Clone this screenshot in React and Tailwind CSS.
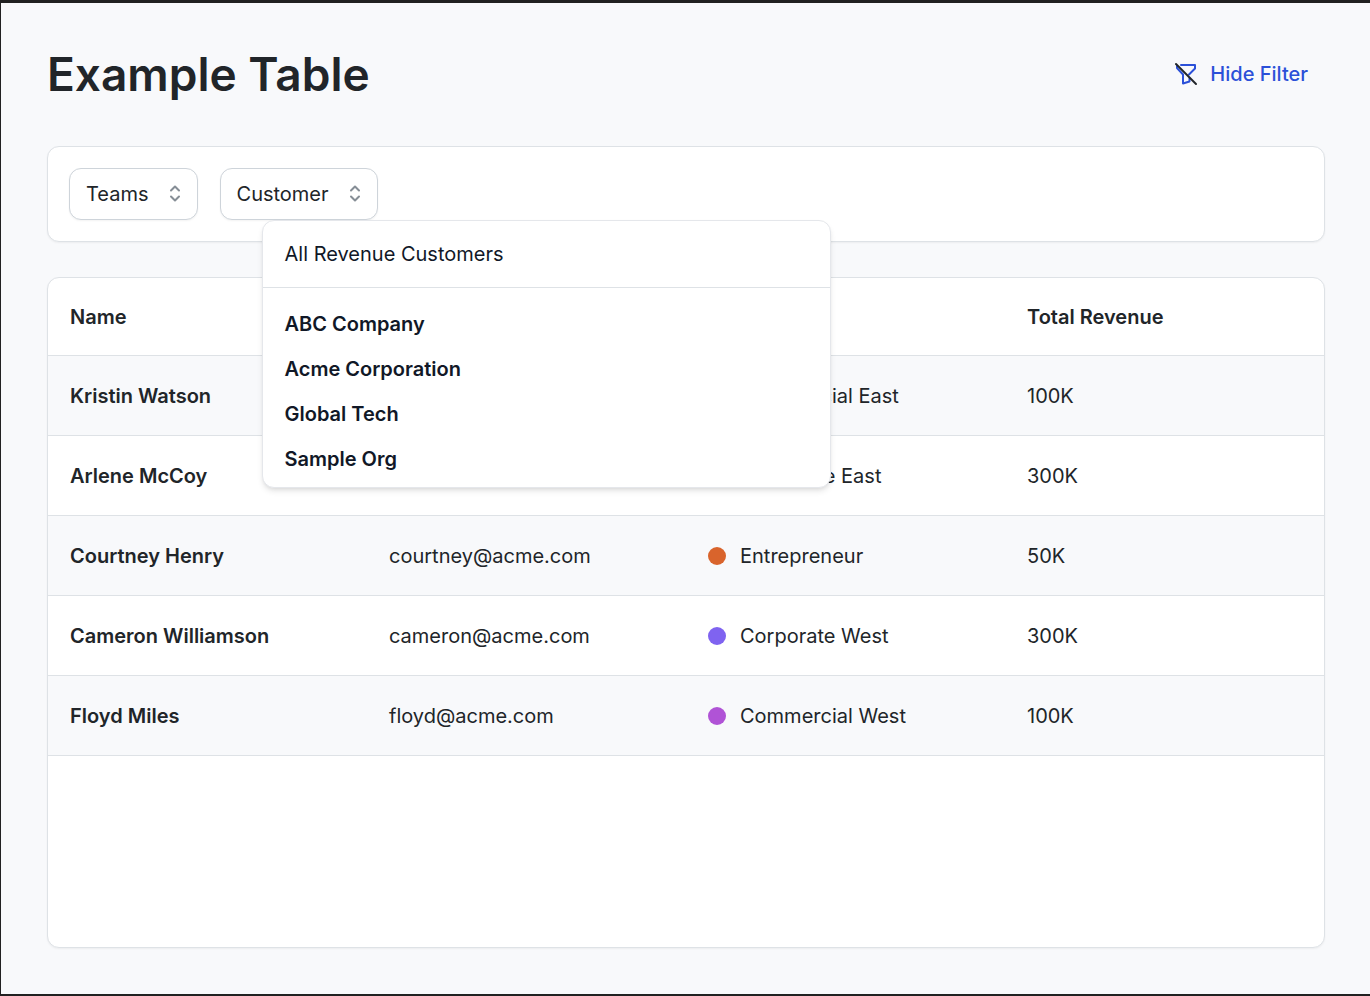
import { useState } from "react";

const rows = [
  { name: "Kristin Watson", email: "kristin@acme.com", team: "Commercial East", dot: "bg-[#2f9e6e]", revenue: "100K" },
  { name: "Arlene McCoy", email: "arlene@acme.com", team: "Corporate East", dot: "bg-[#2b7de0]", revenue: "300K" },
  { name: "Courtney Henry", email: "courtney@acme.com", team: "Entrepreneur", dot: "bg-[#d9642c]", revenue: "50K" },
  { name: "Cameron Williamson", email: "cameron@acme.com", team: "Corporate West", dot: "bg-[#7f63f0]", revenue: "300K" },
  { name: "Floyd Miles", email: "floyd@acme.com", team: "Commercial West", dot: "bg-[#b053d6]", revenue: "100K" },
];

const customers = ["ABC Company", "Acme Corporation", "Global Tech", "Sample Org"];

function FilterOffIcon() {
  return (
    <svg className="size-6" viewBox="0 0 24 24" fill="none" aria-hidden="true">
      <path
        d="M7 3H21V6.5L15 12.5M15.5 16V19.5L9 21.5V12.5L3 6V4"
        stroke="#2b50d8"
        strokeWidth="2"
        strokeLinecap="round"
        strokeLinejoin="round"
      />
      <path d="M2 2L22 22" stroke="#212529" strokeWidth="2" strokeLinecap="round" />
    </svg>
  );
}

function SelectorIcon() {
  return (
    <svg className="h-5 w-3" viewBox="0 0 12 20" fill="none" aria-hidden="true">
      <path
        d="M2 6.5L6 2.5L10 6.5M2 12.5L6 16.5L10 12.5"
        stroke="#868e96"
        strokeWidth="2"
        strokeLinecap="round"
        strokeLinejoin="round"
      />
    </svg>
  );
}

function FilterButton({ label, ...props }) {
  return (
    <button
      type="button"
      className="flex h-[52px] items-center gap-5 rounded-xl border border-[#ced4da] bg-white px-4 shadow-xs"
      {...props}
    >
      {label}
      <SelectorIcon />
    </button>
  );
}

export default function App() {
  const [menuOpen, setMenuOpen] = useState(true);
  const [filterShown, setFilterShown] = useState(true);

  return (
    <div className="flex min-h-screen flex-col border-t-3 border-b-2 border-l border-[#212121] bg-[#f8f9fb] pt-10 pr-[45px] pb-[46px] pl-[46px] font-['Inter',sans-serif] text-xl text-[#212529]">
      <header className="flex h-[62px] items-center justify-between pr-[17px]">
        <h1 className="text-[46px] leading-none font-semibold">Example Table</h1>
        <button
          type="button"
          onClick={() => setFilterShown(!filterShown)}
          className="flex items-center gap-3 font-medium text-[#2b50d8]"
        >
          <FilterOffIcon />
          {filterShown ? "Hide Filter" : "Show Filter"}
        </button>
      </header>

      {filterShown && (
        <section aria-label="Filters" className="mt-[41px] flex gap-[22px] rounded-xl border border-[#dee2e6] bg-white p-[21px] shadow-xs">
          <FilterButton label="Teams" />
          <div className="relative">
            <FilterButton
              label="Customer"
              aria-haspopup="menu"
              aria-expanded={menuOpen}
              onClick={() => setMenuOpen(!menuOpen)}
            />
            {menuOpen && (
              <div role="menu" className="absolute top-full left-[42px] z-10 w-[569px] rounded-xl border border-[#e5e7eb] bg-white text-[#111827] shadow-md">
                <button role="menuitem" type="button" className="block h-[67px] w-full border-b border-[#dee2e6] px-[22px] text-left">
                  All Revenue Customers
                </button>
                <div className="flex flex-col pt-[13px] pb-1.5">
                  {customers.map((customer) => (
                    <button key={customer} role="menuitem" type="button" className="h-[45px] px-[22px] text-left font-semibold">
                      {customer}
                    </button>
                  ))}
                </div>
              </div>
            )}
          </div>
        </section>
      )}

      <section className="mt-[35px] flex-1 overflow-hidden rounded-xl border border-[#dee2e6] bg-white shadow-xs">
        <table className="w-full table-fixed text-left">
          <thead>
            <tr className="h-[77px] border-b border-[#dee2e6]">
              <th className="px-[22px] pt-0.5 font-semibold">Name</th>
              <th className="px-[22px] pt-0.5 font-semibold">Email</th>
              <th className="px-[22px] pt-0.5 font-semibold">Team</th>
              <th className="px-[22px] pt-0.5 font-semibold">Total Revenue</th>
            </tr>
          </thead>
          <tbody>
            {rows.map((row) => (
              <tr key={row.name} className="h-20 border-b border-[#dee2e6] odd:bg-[#f8f9fb]">
                <th scope="row" className="px-[22px] pt-0.5 font-semibold">{row.name}</th>
                <td className="px-[22px] pt-0.5">{row.email}</td>
                <td className="px-[22px] pt-0.5">
                  <span className="flex items-center gap-3.5">
                    <span className={`size-[18px] rounded-full ${row.dot}`} />
                    {row.team}
                  </span>
                </td>
                <td className="px-[22px] pt-0.5">{row.revenue}</td>
              </tr>
            ))}
          </tbody>
        </table>
      </section>
    </div>
  );
}
